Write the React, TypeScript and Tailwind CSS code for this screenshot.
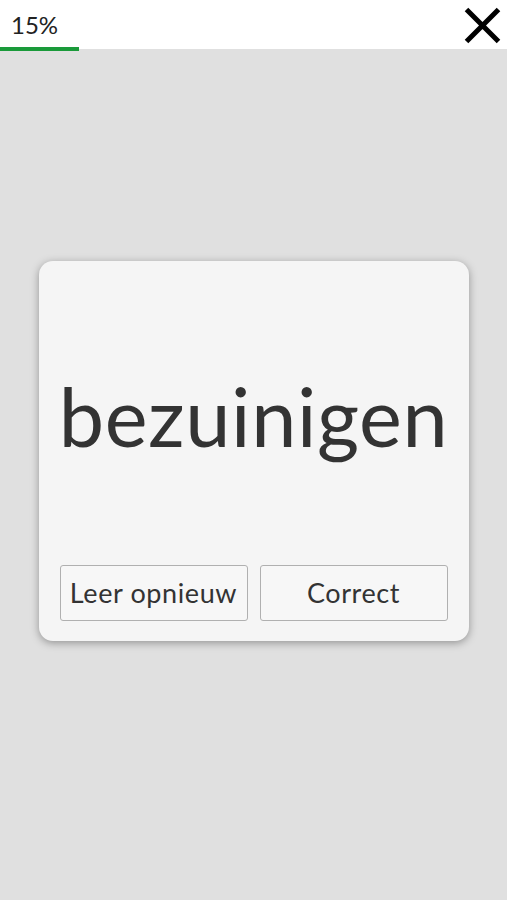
import React from "react";

export default function App() {
  return (
    <div className="min-h-[900px] w-full bg-[#e0e0e0] font-['Lato',sans-serif] text-[#333333]">
      <header className="relative h-[49px] bg-white">
        <div className="pl-[11px] pt-[10px] text-[24px] leading-[30px] text-[#222]">15%</div>
        <div className="absolute bottom-[-2px] left-0 h-[4px] w-[79px] bg-[#1a9a3a]" />
        <button className="absolute right-[6px] top-[6px] flex h-[38px] w-[38px] items-center justify-center">
          <svg width="37" height="37" viewBox="0 0 37 37">
            <path d="M2.5 2.5 L34.5 34.5 M34.5 2.5 L2.5 34.5" stroke="#000" strokeWidth="5" strokeLinecap="butt" />
          </svg>
        </button>
      </header>
      <main className="flex justify-center pt-[212px]">
        <div className="flex h-[380px] w-[430px] flex-col rounded-[14px] bg-[#f5f5f5] px-[21px] pb-[20px] shadow-[0_2px_8px_rgba(0,0,0,0.35)]">
          <div className="flex flex-1 items-center justify-center pt-[4px]">
            <span className="text-[81px] leading-none tracking-[0.6px]">bezuinigen</span>
          </div>
          <div className="flex gap-[12px]">
            <button className="h-[56px] flex-1 rounded-[3px] border border-[#b0b0b0] bg-[#f7f7f7] text-[27px] tracking-[0.6px] text-[#333]">
              Leer opnieuw
            </button>
            <button className="h-[56px] flex-1 rounded-[3px] border border-[#b0b0b0] bg-[#f7f7f7] text-[27px] tracking-[0.6px] text-[#333]">
              Correct
            </button>
          </div>
        </div>
      </main>
    </div>
  );
}
